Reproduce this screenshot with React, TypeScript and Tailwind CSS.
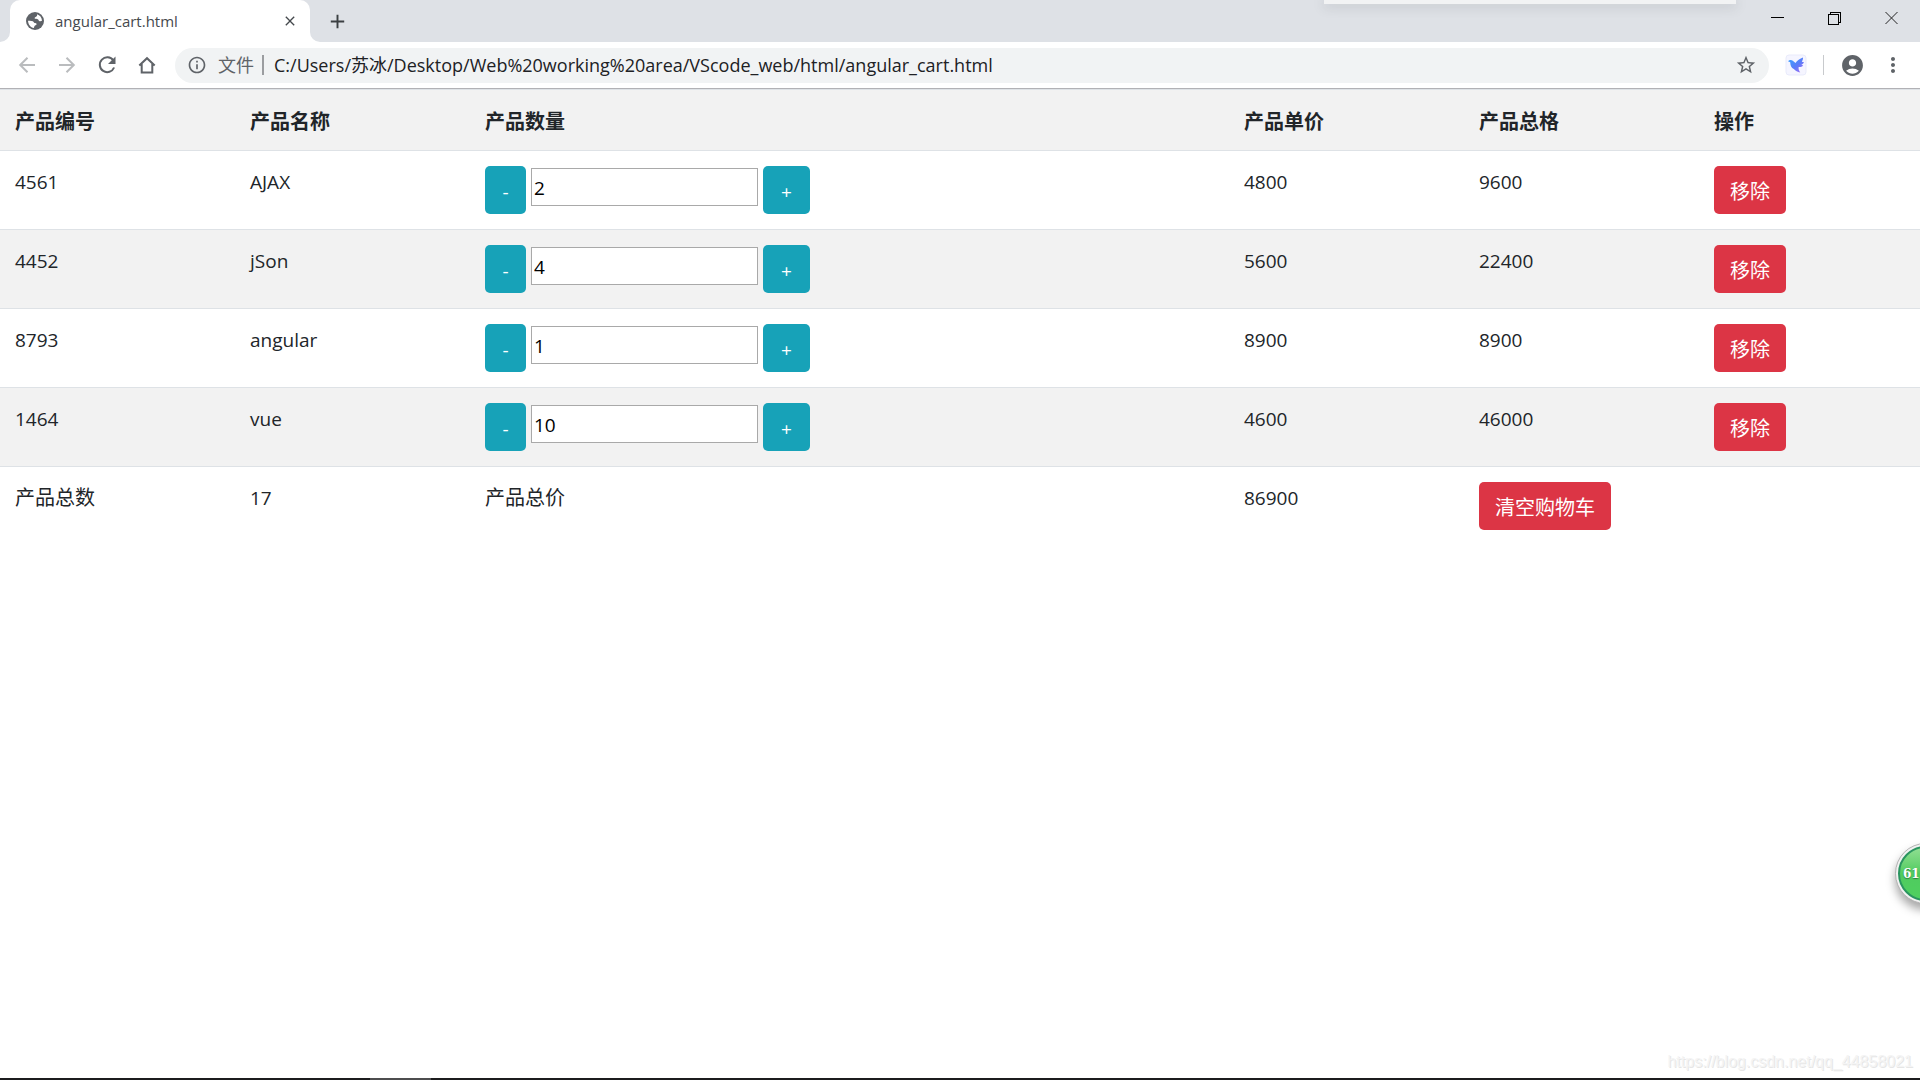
import React, { useState } from 'react'
import {
  MdAccountCircle,
  MdAdd,
  MdClose,
  MdInfoOutline,
  MdMoreVert,
  MdStarBorder,
} from 'react-icons/md'

type Product = { id: number; name: string; count: number; price: number }

const initialProducts: Product[] = [
  { id: 4561, name: 'AJAX', count: 2, price: 4800 },
  { id: 4452, name: 'jSon', count: 4, price: 5600 },
  { id: 8793, name: 'angular', count: 1, price: 8900 },
  { id: 1464, name: 'vue', count: 10, price: 4600 },
]

const headings = ['产品编号', '产品名称', '产品数量', '产品单价', '产品总格', '操作']

function TabStrip() {
  return (
    <div className="h-[42px] flex items-stretch bg-[#dee1e6] relative">
      {/* Edge of a panel hanging in from the top of the screen */}
      <div className="absolute top-0 right-[184px] w-[412px] h-1 bg-[#f2f3f4] shadow-[0_2px_12px_rgba(60,64,67,0.25)]" />

      <svg className="w-[10px] h-[10px] self-end" viewBox="0 0 10 10">
        <path d="M10 0v10H0A10 10 0 0 0 10 0z" fill="#fff" />
      </svg>
      <div className="w-[300px] bg-white rounded-t-[10px] flex items-center pl-4 pr-3">
        <svg className="size-[18px]" viewBox="0 0 18 18">
          <circle cx="9" cy="9" r="9" fill="#5f6368" />
          <path
            d="M11 2.300c2.800.8 4.900 3.300 5 6.500-1 .6-2 .7-2.900.1-.6-.5-.6-1.300-1.300-1.700-.9-.4-2.300.1-3-.6-.6-.7.1-1.500.9-1.700 1.100-.2 1.700-1 1.300-2.600z"
            fill="#fff"
          />
          <path
            d="M2 8.800c1.600-.3 3.600-.2 4.900.5.9.5.9 1.400 1.800 1.700.8.200 1.800.1 1.900.9.1.9-.9 1.100-1.600 1.500-.7.500-.7 1.500-1.100 2.600C4.500 15.500 2.100 12.500 2 8.800z"
            fill="#fff"
          />
        </svg>
        <span className="ml-[11px] flex-1 text-[15px] text-[#45494d]">angular_cart.html</span>
        <button aria-label="Close tab" className="text-[#45494d]">
          <MdClose className="size-4" />
        </button>
      </div>
      <svg className="w-[10px] h-[10px] self-end" viewBox="0 0 10 10">
        <path d="M0 0v10h10A10 10 0 0 1 0 0z" fill="#fff" />
      </svg>
      <button aria-label="New tab" className="ml-[2px] px-1 text-[#3c4043]">
        <MdAdd className="size-[23px]" />
      </button>

      <div className="ml-auto h-9 flex items-center">
        <button aria-label="Minimize" className="w-[57px] flex justify-center">
          <svg className="size-[14px]" viewBox="0 0 14 14" shapeRendering="crispEdges">
            <path d="M0 6.500h13" stroke="#000" fill="none" />
          </svg>
        </button>
        <button aria-label="Restore" className="w-[57px] flex justify-center">
          <svg className="size-[14px]" viewBox="0 0 14 14" shapeRendering="crispEdges">
            <path d="M.5 3.500h10v10h-10zM2.500 3.500v-2h10v10h-2" stroke="#000" fill="none" />
          </svg>
        </button>
        <button aria-label="Close" className="w-[57px] flex justify-center">
          <svg className="size-[14px]" viewBox="0 0 14 14">
            <path d="M.5 1l12 12M12.500 1L.5 13" stroke="#222" fill="none" />
          </svg>
        </button>
      </div>
    </div>
  )
}

function Toolbar() {
  return (
    <div className="h-[47px] flex items-center bg-white border-b border-[#b1b1b5] pl-[17px] pr-[15px] text-[#5f6368]">
      <div className="flex items-center gap-5">
        <button aria-label="Back" className="text-[#babcbe]">
          <svg className="size-5" viewBox="0 0 20 20" fill="none" stroke="currentColor" strokeWidth="2">
            <path d="M18 10H4M10.500 2.700L3.200 10l7.300 7.300" />
          </svg>
        </button>
        <button aria-label="Forward" className="text-[#babcbe]">
          <svg className="size-5" viewBox="0 0 20 20" fill="none" stroke="currentColor" strokeWidth="2">
            <path d="M2 10h14M9.500 2.700l7.300 7.300-7.300 7.300" />
          </svg>
        </button>
        <button aria-label="Reload">
          <svg className="size-5" viewBox="0 0 20 20" fill="none" stroke="currentColor" strokeWidth="2">
            <path d="M16.300 5.500A7.400 7.400 0 1 0 17.100 12.500" />
            <path d="M18.500 1.500V9H11z" fill="currentColor" stroke="none" />
          </svg>
        </button>
        <button aria-label="Home">
          <svg className="size-5" viewBox="0 0 20 20" fill="none" stroke="currentColor" strokeWidth="2">
            <path d="M2.300 10.500L10 3.200l7.700 7.300M4.700 9v8.500h10.600V9" />
          </svg>
        </button>
      </div>

      <div className="ml-[18px] flex-1 h-[35px] flex items-center rounded-full bg-[#f1f3f4] pl-3 pr-3">
        <MdInfoOutline className="size-[20px]" />
        <label htmlFor="address" className="ml-[11px] text-lg leading-6">
          文件
        </label>
        <span className="ml-2 w-[2px] h-5 bg-[#9b9da0]" />
        <input
          id="address"
          className="ml-[10px] flex-1 bg-transparent outline-none text-lg text-[#202124]"
          defaultValue="C:/Users/苏冰/Desktop/Web%20working%20area/VScode_web/html/angular_cart.html"
        />
        <button aria-label="Bookmark">
          <MdStarBorder className="size-[22px]" />
        </button>
      </div>

      <button aria-label="Bird extension" className="ml-4">
        <svg className="size-[22px]" viewBox="0 0 22 22">
          <defs>
            <linearGradient id="bird" x1="0" y1="0" x2="1" y2="1">
              <stop offset="0" stopColor="#35a5ff" />
              <stop offset="0.55" stopColor="#5b7cf8" />
              <stop offset="1" stopColor="#b06cf5" />
            </linearGradient>
          </defs>
          <rect x="1" y="1" width="20" height="20" rx="3" fill="#f5f5ff" stroke="#e9ebfb" />
          <path
            d="M3 7.200C4.200 6 6.200 5.600 7.800 6.800L10.500 9C12 6.300 15 5 18 3.500c.1 1.700-.4 3-1.200 4.200l2.200.6c-.5 1.300-1.400 2-2.600 2.400l1.800.8c-1.300 1.400-2.900 1.700-4.500 1.500-.4 1.800.2 3.600 1.500 5.500-2.600-.5-4.700-1.700-6.400-3.400C6.300 14 5.300 11.500 5.200 8.200z"
            fill="url(#bird)"
          />
        </svg>
      </button>
      <span className="ml-4 w-px h-5 bg-[#c8cacd]" />
      <button aria-label="Profile" className="ml-4">
        <MdAccountCircle className="size-[25px]" />
      </button>
      <button aria-label="Menu" className="ml-4">
        <MdMoreVert className="size-[24px]" />
      </button>
    </div>
  )
}

function Cart() {
  const [products, setProducts] = useState(initialProducts)

  const setCount = (id: number, count: number) =>
    setProducts(products.map((p) => (p.id === id ? { ...p, count: Math.max(count, 0) } : p)))
  const remove = (id: number) => setProducts(products.filter((p) => p.id !== id))

  const totalCount = products.reduce((sum, p) => sum + p.count, 0)
  const totalPrice = products.reduce((sum, p) => sum + p.count * p.price, 0)

  return (
    <table className="w-full table-fixed border-collapse text-left text-[19px] leading-8 text-[#212529]">
      <colgroup>
        <col className="w-[235px]" />
        <col className="w-[235px]" />
        <col />
        <col className="w-[235px]" />
        <col className="w-[235px]" />
        <col className="w-[221px]" />
      </colgroup>
      <thead>
        <tr className="bg-[#f2f2f2] border-y border-[#dee2e6]">
          {headings.map((h) => (
            <th key={h} className="px-[15px] pt-4 pb-3 text-xl leading-8 font-bold">
              {h}
            </th>
          ))}
        </tr>
      </thead>
      <tbody>
        {products.map((p) => (
          <tr key={p.id} className="align-top border-b border-[#dee2e6] even:bg-[#f2f2f2]">
            <td className="p-[15px]">{p.id}</td>
            <td className="p-[15px]">{p.name}</td>
            <td className="p-[15px]">
              <div className="flex items-start gap-[5px]">
                <button
                  aria-label={`减少 ${p.name}`}
                  className="w-[41px] h-12 pt-1 rounded-[5px] bg-[#17a2b8] text-white"
                  onClick={() => setCount(p.id, p.count - 1)}
                >
                  -
                </button>
                <input
                  aria-label={`${p.name} 产品数量`}
                  className="mt-[2px] w-[227px] h-[38px] px-[2px] pt-[2px] bg-white border border-[#a9a9a9] text-black"
                  value={p.count}
                  onChange={(e) => setCount(p.id, Number(e.target.value) || 0)}
                />
                <button
                  aria-label={`增加 ${p.name}`}
                  className="w-[47px] h-12 pt-1 rounded-[5px] bg-[#17a2b8] text-white"
                  onClick={() => setCount(p.id, p.count + 1)}
                >
                  +
                </button>
              </div>
            </td>
            <td className="p-[15px]">{p.price}</td>
            <td className="p-[15px]">{p.count * p.price}</td>
            <td className="p-[15px]">
              <button
                className="block h-12 px-4 pt-1 rounded-[5px] bg-[#dc3545] text-xl text-white"
                onClick={() => remove(p.id)}
              >
                移除
              </button>
            </td>
          </tr>
        ))}
        <tr className="align-top">
          <td className="p-[15px] text-xl leading-8">产品总数</td>
          <td className="p-[15px]">{totalCount}</td>
          <td className="p-[15px] text-xl leading-8">产品总价</td>
          <td className="p-[15px]">{totalPrice}</td>
          <td className="p-[15px]">
            <button
              className="block h-12 px-4 pt-1 rounded-[5px] bg-[#dc3545] text-xl text-white"
              onClick={() => setProducts([])}
            >
              清空购物车
            </button>
          </td>
          <td />
        </tr>
      </tbody>
    </table>
  )
}

export default function App() {
  return (
    <div className="min-h-screen flex flex-col relative overflow-hidden bg-white font-['Open_Sans','Noto_Sans_CJK_SC',sans-serif]">
      <TabStrip />
      <Toolbar />
      <main className="flex-1">
        <Cart />
      </main>

      {/* Desktop speed-up ball, half off the right edge */}
      <div className="absolute -right-9 bottom-[176px] size-[61px] rounded-full border border-[#b4b4b4] bg-[#f1f1f1] p-[2px] shadow-[0_6px_10px_rgba(0,0,0,0.35)]">
        <div className="size-full rounded-full border-2 border-[#2a9560] bg-linear-to-b from-[#8fdf92] via-[#4fcb5f] to-[#4fd05f] flex items-center pl-[3px]">
          <span className="font-['DejaVu_Serif',serif] text-xs font-bold text-white [text-shadow:0_1px_1px_#2a7a40]">
            61
          </span>
        </div>
      </div>

      <p className="pr-[7px] pb-1 text-right font-['Liberation_Sans',sans-serif] text-base text-[#f4f4f4] [text-shadow:1px_1px_0_#e6e6e6]">
        https://blog.csdn.net/qq_44858021
      </p>

      {/* Top edge of the taskbar */}
      <div className="h-[2px] bg-[#1c1c1e] flex">
        <div className="ml-[370px] w-[61px] bg-[#4d4d4f]" />
      </div>
    </div>
  )
}
